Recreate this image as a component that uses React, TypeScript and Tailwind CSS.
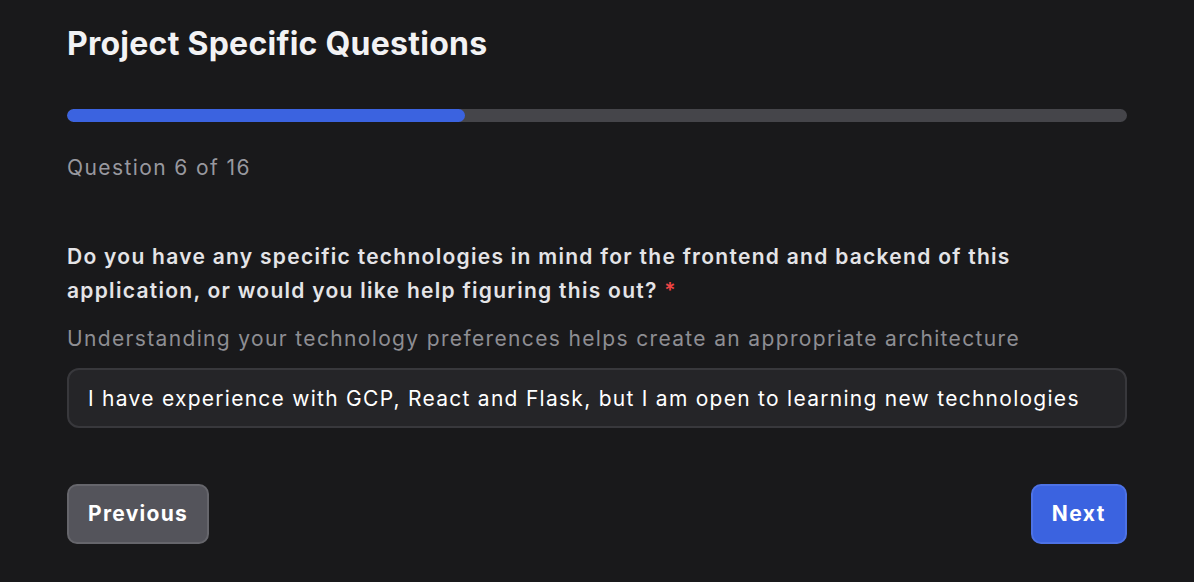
import React from 'react';

const current = 6;
const total = 16;

export default function App() {
  const pct = (current / total) * 100;
  return (
    <div className="min-h-screen w-full bg-[#19191b] font-['Inter',sans-serif] antialiased">
      <div className="mx-auto w-[1060px] pt-[24px]">
        <h1 className="text-[32px] leading-[40px] font-bold text-[#f2f2f4] tracking-[0.25px]">
          Project Specific Questions
        </h1>

        <div className="mt-[45px] h-[13px] w-full rounded-full bg-[#45454a] overflow-hidden">
          <div className="h-full rounded-full bg-[#3b63e0]" style={{ width: `${pct}%` }} />
        </div>

        <p className="mt-[31px] text-[21px] leading-[30px] tracking-[1.4px] text-[#98989f]">
          Question {current} of {total}
        </p>

        <div className="mt-[57px]">
          <label className="block text-[21px] leading-[34px] font-semibold tracking-[1.28px] text-[#e4e4e7]">
            Do you have any specific technologies in mind for the frontend and backend of this
            application, or would you like help figuring this out?{' '}
            <span className="text-[#ef4444]">*</span>
          </label>
          <p className="mt-[16px] text-[21px] leading-[30px] tracking-[1.35px] text-[#8e8e93]">
            Understanding your technology preferences helps create an appropriate architecture
          </p>
          <input
            className="mt-[14px] h-[60px] w-full rounded-[12px] border-2 border-[#38383c] bg-[#252528] px-[19px] text-[21px] tracking-[1.27px] text-white outline-none"
            defaultValue="I have experience with GCP, React and Flask, but I am open to learning new technologies"
          />
        </div>

        <div className="mt-[56px] flex items-center justify-between">
          <button className="h-[60px] rounded-[10px] border-2 border-[#66666c] bg-[#54545b] px-[19px] text-[21px] font-bold tracking-[1.3px] text-white">
            Previous
          </button>
          <button className="h-[60px] rounded-[10px] border-2 border-[#4d72e6] bg-[#3b63e0] px-[19px] text-[21px] font-bold tracking-[1.5px] text-white">
            Next
          </button>
        </div>
      </div>
    </div>
  );
}
